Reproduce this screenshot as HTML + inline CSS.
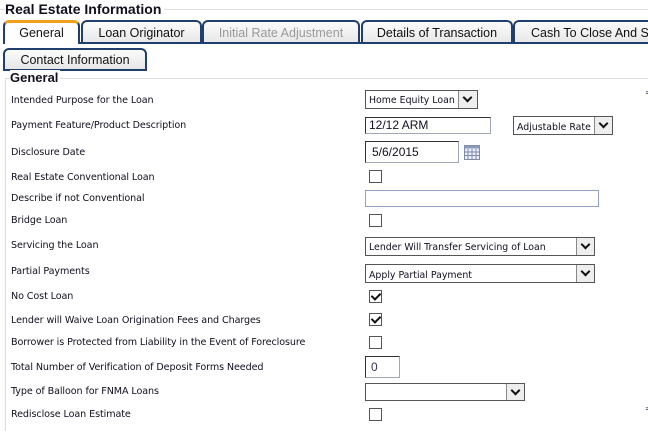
<!DOCTYPE html>
<html><head><style>
*{margin:0;padding:0;box-sizing:border-box}
body{width:648px;height:431px;overflow:hidden;background:#fff;position:relative;font-family:"DejaVu Sans",Verdana,sans-serif;color:#101020}
.a{position:absolute}
.lbl{position:absolute;left:11px;font-size:9.6px;line-height:12px;white-space:nowrap;letter-spacing:-0.1px}
.tab{position:absolute;height:24px;top:20px;border:2px solid #1f3f6f;border-bottom:none;border-radius:6px 6px 0 0;background:linear-gradient(#fbfbfb,#e6e6e6);font-family:"Liberation Sans",Arial,sans-serif;font-size:12.5px;text-align:center;line-height:22px;color:#111;white-space:nowrap;overflow:hidden}
.inp{position:absolute;border:1px solid #a0a8b8;border-top-color:#333;border-left-color:#333;background:#fff;font-family:"Liberation Sans",Arial,sans-serif;font-size:12px;padding-left:3px}
.sel{position:absolute;border:1px solid #555;background:#fff;font-size:9.4px;padding-left:3px;white-space:nowrap;overflow:hidden}
.sel .b{position:absolute;right:0;top:0;bottom:0;width:18px;border-left:1px solid #888;background:#eee}
.sel .b:after{content:"";position:absolute;left:5px;top:3px;width:5px;height:5px;border-right:2px solid #111;border-bottom:2px solid #111;transform:rotate(45deg)}
.cb{position:absolute;left:369px;width:13px;height:13px;border:1px solid #555;background:#fff}
.cb.c:after{content:"";position:absolute;left:3px;top:0px;width:4px;height:7px;border-right:2px solid #111;border-bottom:2px solid #111;transform:rotate(45deg)}
</style></head><body>
<div class="a" style="left:5px;top:1px;font-family:'Liberation Sans',Arial,sans-serif;font-weight:bold;font-size:14px;background:#fff;padding-right:3px;z-index:2">Real Estate Information</div>
<div class="a" style="left:0;top:9px;width:648px;height:1px;background:#ddd"></div>
<div class="tab" style="left:3px;width:77px;border-top:3px solid #f0a020;background:#fff;line-height:21px">General</div>
<div class="tab" style="left:81px;width:121px">Loan Originator</div>
<div class="tab" style="left:202px;width:158px;color:#999">Initial Rate Adjustment</div>
<div class="tab" style="left:361px;width:152px">Details of Transaction</div>
<div class="tab" style="left:513px;width:150px;text-align:left;padding-left:16px">Cash To Close And Summary</div>
<div class="a" style="left:80px;top:42px;width:568px;height:2px;background:#1f3f6f"></div>
<div class="tab" style="left:3px;top:48px;width:144px;height:23px;border-bottom:2px solid #1f3f6f;line-height:20px">Contact Information</div>
<div class="a" style="left:6px;top:78px;width:642px;height:1px;background:#ddd"></div>
<div class="a" style="left:5px;top:78px;width:1px;height:353px;background:#ddd"></div>
<div class="a" style="left:10px;top:70px;font-family:'Liberation Sans',Arial,sans-serif;font-weight:bold;font-size:13px;background:#fff;padding-right:2px">General</div>
<div class="a" style="left:645px;top:88px;font-size:8px">=</div>
<div class="a" style="left:645px;top:404px;font-size:8px">=</div>

<div class="lbl" style="top:95px">Intended Purpose for the Loan</div>
<div class="lbl" style="top:120px">Payment Feature/Product Description</div>
<div class="lbl" style="top:147px">Disclosure Date</div>
<div class="lbl" style="top:172px">Real Estate Conventional Loan</div>
<div class="lbl" style="top:193px">Describe if not Conventional</div>
<div class="lbl" style="top:215px">Bridge Loan</div>
<div class="lbl" style="top:240px">Servicing the Loan</div>
<div class="lbl" style="top:266px">Partial Payments</div>
<div class="lbl" style="top:291px">No Cost Loan</div>
<div class="lbl" style="top:315px">Lender will Waive Loan Origination Fees and Charges</div>
<div class="lbl" style="top:337px">Borrower is Protected from Liability in the Event of Foreclosure</div>
<div class="lbl" style="top:362px">Total Number of Verification of Deposit Forms Needed</div>
<div class="lbl" style="top:386px">Type of Balloon for FNMA Loans</div>
<div class="lbl" style="top:409px">Redisclose Loan Estimate</div>

<div class="sel" style="left:365px;top:90px;width:113px;height:19px;line-height:20px">Home Equity Loan<div class="b" style="width:19px"></div></div>
<div class="inp" style="left:365px;top:117px;width:126px;height:17px;line-height:15px">12/12 ARM</div>
<div class="sel" style="left:513px;top:116px;width:100px;height:19px;line-height:21px">Adjustable Rate<div class="b"></div></div>
<div class="inp" style="left:365px;top:141px;width:94px;height:22px;line-height:20px;padding-left:6px">5/6/2015</div>
<svg class="a" style="left:464px;top:145px" width="16" height="15"><rect x="0.5" y="0.5" width="15" height="14" fill="#eef" stroke="#7a8aa8"/><rect x="0.5" y="0.5" width="15" height="3" fill="#8a9ab8"/><path d="M4 4V14M8 4V14M12 4V14M1 7H15M1 10.5H15" stroke="#7a8aa8"/></svg>
<div class="cb" style="top:170px"></div>
<div class="inp" style="left:365px;top:190px;width:234px;height:17px;border-color:#8fa0c0"></div>
<div class="cb" style="top:214px"></div>
<div class="sel" style="left:365px;top:237px;width:230px;height:19px;line-height:19px">Lender Will Transfer Servicing of Loan<div class="b"></div></div>
<div class="sel" style="left:365px;top:264px;width:230px;height:19px;line-height:21px">Apply Partial Payment<div class="b"></div></div>
<div class="cb c" style="top:290px"></div>
<div class="cb c" style="top:313px"></div>
<div class="cb" style="top:336px"></div>
<div class="inp" style="left:365px;top:356px;width:35px;height:22px;line-height:20px;padding-left:5px;color:#335">0</div>
<div class="sel" style="left:365px;top:383px;width:160px;height:18px"><div class="b"></div></div>
<div class="cb" style="top:408px"></div>
</body></html>
